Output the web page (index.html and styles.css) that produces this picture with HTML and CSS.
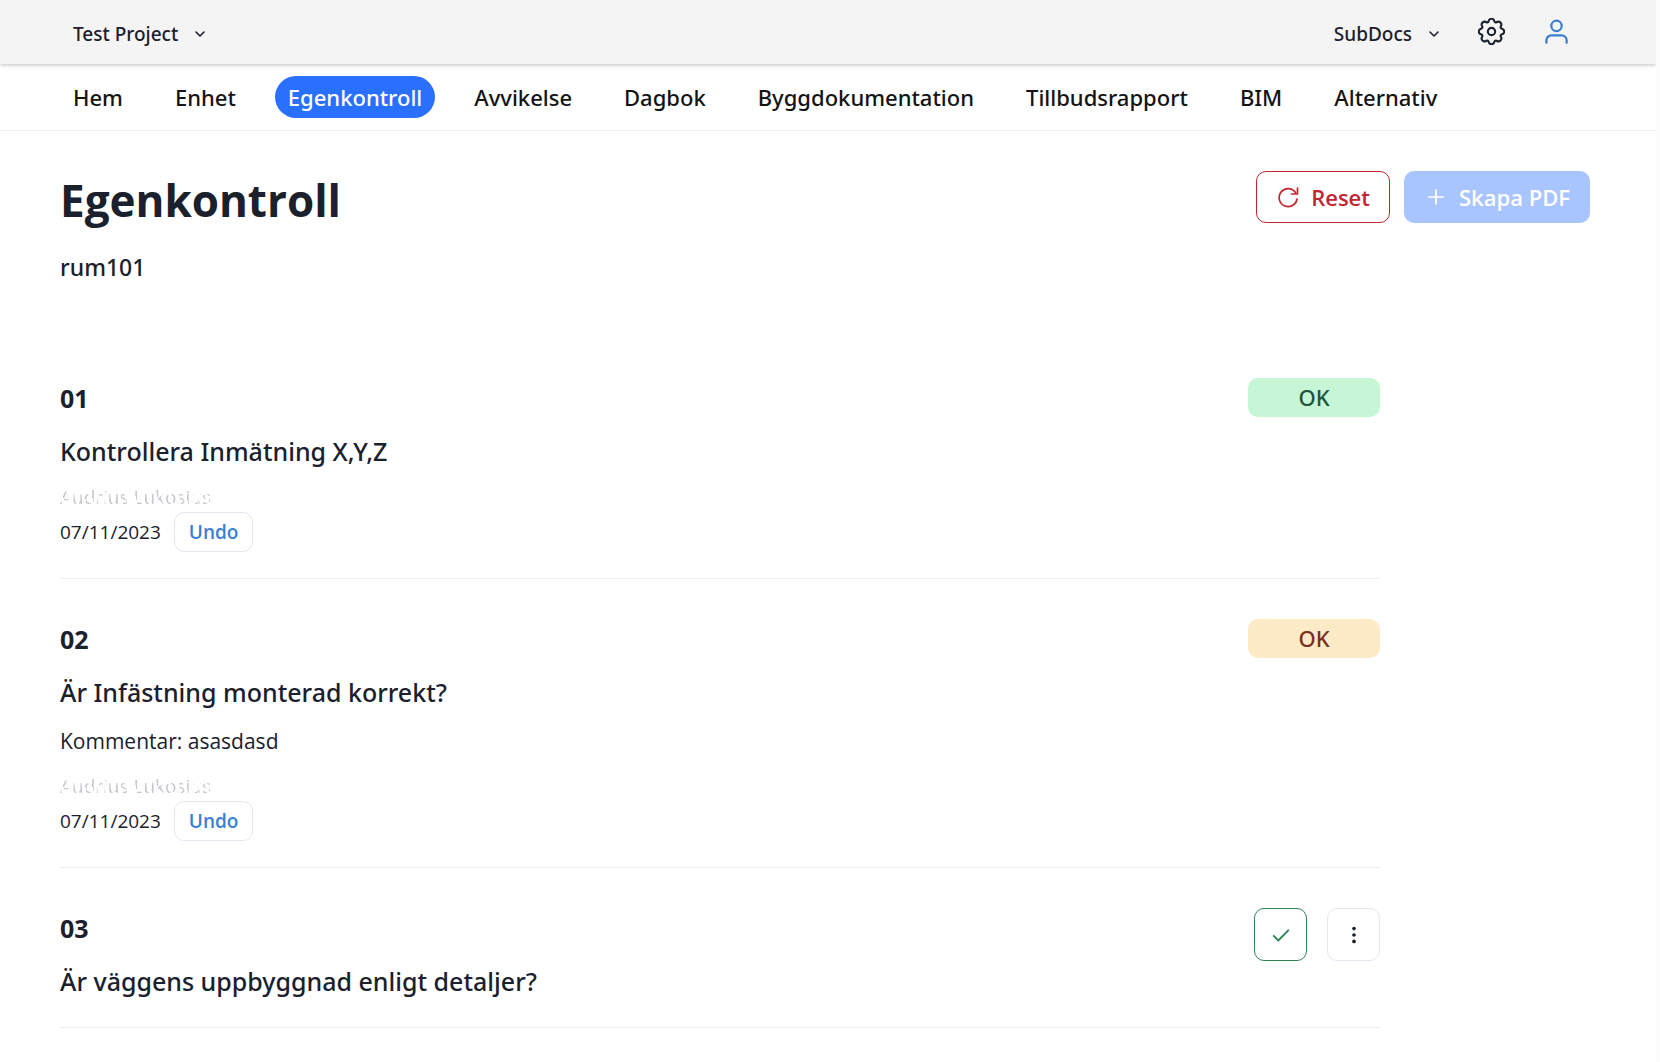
FILE: index.html
```html
<!DOCTYPE html>
<html lang="sv">
<head>
<meta charset="utf-8">
<meta name="viewport" content="width=device-width, initial-scale=1">
<title>Egenkontroll</title>
<link rel="stylesheet" href="styles.css">
</head>
<body>
<header class="topbar">
  <button class="picker" type="button">Test Project
    <svg class="chevron" viewBox="0 0 12 12"><path d="M2 4l4 4 4-4"/></svg>
  </button>
  <div class="topbar-tools">
    <button class="picker" type="button">SubDocs
      <svg class="chevron" viewBox="0 0 12 12"><path d="M2 4l4 4 4-4"/></svg>
    </button>
    <button class="tool" type="button" aria-label="Settings">
      <svg class="gear" viewBox="-0.500 -0.500 17 17"><circle cx="8" cy="8" r="2.300"/><path d="M9.796 1.343c-.527-1.790-3.065-1.790-3.592 0l-.094.319a.873.873 0 0 1-1.255.520l-.292-.160c-1.640-.892-3.433.902-2.540 2.541l.159.292a.873.873 0 0 1-.520 1.255l-.319.094c-1.790.527-1.790 3.065 0 3.592l.319.094a.873.873 0 0 1 .520 1.255l-.160.292c-.892 1.640.901 3.434 2.541 2.540l.292-.159a.873.873 0 0 1 1.255.520l.094.319c.527 1.790 3.065 1.790 3.592 0l.094-.319a.873.873 0 0 1 1.255-.520l.292.160c1.640.893 3.434-.902 2.540-2.541l-.159-.292a.873.873 0 0 1 .520-1.255l.319-.094c1.790-.527 1.790-3.065 0-3.592l-.319-.094a.873.873 0 0 1-.520-1.255l.160-.292c.893-1.640-.902-3.433-2.541-2.540l-.292.159a.873.873 0 0 1-1.255-.520z"/></svg>
    </button>
    <button class="tool" type="button" aria-label="Account">
      <svg class="user" viewBox="0 0 24 24"><circle cx="12" cy="7" r="4.600"/><path d="M3 22v-2a4.500 4.500 0 0 1 4.500-4.500h9a4.500 4.500 0 0 1 4.500 4.500v2"/></svg>
    </button>
  </div>
</header>
<nav class="tabs">
  <a class="tab" href="#">Hem</a>
  <a class="tab" href="#">Enhet</a>
  <a class="tab tab-active" href="#" aria-current="page">Egenkontroll</a>
  <a class="tab" href="#">Avvikelse</a>
  <a class="tab" href="#">Dagbok</a>
  <a class="tab" href="#">Byggdokumentation</a>
  <a class="tab" href="#">Tillbudsrapport</a>
  <a class="tab" href="#">BIM</a>
  <a class="tab" href="#">Alternativ</a>
</nav>
<main class="page">
  <div class="page-head">
    <div>
      <h1 class="title">Egenkontroll</h1>
      <p class="room">rum101</p>
    </div>
    <div class="actions">
      <button class="btn btn-reset" type="button">
        <svg class="btn-icon" viewBox="0 0 22 22"><path d="M18.500 6.500A9 9 0 1 0 20 13M20.500 2v6h-6"/></svg>
        Reset
      </button>
      <button class="btn btn-create" type="button" disabled>
        <svg class="btn-icon" viewBox="0 0 22 22"><path d="M11 4v14M4 11h14"/></svg>
        Skapa PDF
      </button>
    </div>
  </div>
  <div class="checks">
    <section class="check">
      <div class="check-body">
        <p class="number">01</p>
        <h2 class="question">Kontrollera Inmätning X,Y,Z</h2>
        <p class="signer">Audrius Lukosius</p>
        <div class="stamp"><time datetime="2023-11-07">07/11/2023</time><button class="undo" type="button">Undo</button></div>
      </div>
      <span class="badge badge-green">OK</span>
    </section>
    <section class="check">
      <div class="check-body">
        <p class="number">02</p>
        <h2 class="question">Är Infästning monterad korrekt?</h2>
        <p class="comment">Kommentar: asasdasd</p>
        <p class="signer">Audrius Lukosius</p>
        <div class="stamp"><time datetime="2023-11-07">07/11/2023</time><button class="undo" type="button">Undo</button></div>
      </div>
      <span class="badge badge-orange">OK</span>
    </section>
    <section class="check">
      <div class="check-body">
        <p class="number">03</p>
        <h2 class="question">Är väggens uppbyggnad enligt detaljer?</h2>
      </div>
      <div class="check-tools">
        <button class="square square-ok" type="button" aria-label="OK"><svg viewBox="0 0 24 24"><path d="M4 13l5 5L20 7"/></svg></button>
        <button class="square" type="button" aria-label="More"><svg class="dots" viewBox="0 0 24 24"><circle cx="12" cy="5" r="2"/><circle cx="12" cy="12" r="2"/><circle cx="12" cy="19" r="2"/></svg></button>
      </div>
    </section>
  </div>
</main>
</body>
</html>
```

FILE: styles.css
```css
* { box-sizing: border-box; }
body {
  margin: 0;
  min-height: 100vh;
  border-right: 4px solid #fcfcfc;
  background: #fff;
  color: #1a202c;
  font-family: "Open Sans", "Noto Sans", sans-serif;
  font-size: 19px;
  line-height: 28px;
}
h1, h2, p { margin: 0; }
button { font: inherit; color: inherit; margin: 0; padding: 0; border: 0; background: none; cursor: pointer; }
svg { display: block; flex: none; fill: none; stroke: currentColor; stroke-linecap: round; stroke-linejoin: round; }

.topbar {
  display: flex;
  justify-content: space-between;
  align-items: center;
  height: 64px;
  padding: 0 86px 0 73px;
  background: #f4f4f4;
  box-shadow: 0 1px 4px rgba(0, 0, 0, 0.25);
}
.picker { display: flex; align-items: center; gap: 16px; padding-top: 4px; font-family: "Noto Sans", sans-serif; font-size: 19px; font-weight: 500; }
.chevron { width: 12px; height: 12px; stroke-width: 1.6; }
.topbar-tools { display: flex; align-items: center; gap: 38px; }
.tool { display: block; padding-bottom: 2px; }
.tool svg { width: 27px; height: 27px; }
.gear { stroke-width: 1.3; }
.user { color: #3a7fd0; stroke-width: 2; }

.tabs {
  display: flex;
  align-items: center;
  gap: 26px;
  height: 67px;
  padding: 0 60px;
  border-bottom: 1px solid #edeef0;
}
.tab { padding: 7px 13px; border-radius: 21px; color: #141414; font-family: "Noto Sans", sans-serif; font-size: 22px; font-weight: 500; text-decoration: none; }
.tab-active { background: #2970ff; color: #fff; }

.page { padding: 40px 66px 32px 60px; }
.page-head { display: flex; justify-content: space-between; align-items: flex-start; min-height: 167px; }
.title { font-size: 44px; line-height: 58px; font-weight: 700; }
.room { margin-top: 22px; font-family: "Noto Sans", sans-serif; font-size: 23px; line-height: 32px; font-weight: 500; }
.actions { display: flex; gap: 14px; }
.btn { display: flex; align-items: center; gap: 12px; height: 52px; padding: 0 19px 0 20px; border: 1px solid transparent; border-radius: 10px; font-size: 22px; font-weight: 600; }
.btn-icon { width: 22px; height: 22px; stroke-width: 1.7; }
.btn-reset { color: #c2262f; border-color: #c2262f; background: #fff; }
.btn-create { color: #fff; background: #a9c5ff; }

.checks { max-width: 1320px; }
.check { display: flex; justify-content: space-between; align-items: flex-start; padding: 40px 0 26px; border-bottom: 1px solid #edeef0; }
.number { font-size: 25px; line-height: 40px; font-weight: 700; }
.question { margin-top: 13px; font-family: "Noto Sans", sans-serif; font-size: 25px; line-height: 40px; font-weight: 500; }
.comment { margin-top: 10px; font-size: 21px; line-height: 38px; }
.signer {
  margin-top: 11px;
  color: #c4c7cc;
  font-size: 19px;
  line-height: 30px;
  mask-image: repeating-linear-gradient(75deg, #000 0 3px, transparent 5px 7px);
}
.stamp { display: flex; align-items: center; gap: 13px; }
.undo { height: 40px; padding: 0 14px; border: 1px solid #e2e8f0; border-radius: 10px; color: #3a7fd0; font-size: 19px; font-weight: 600; }
.badge { width: 132px; border-radius: 10px; font-family: "Noto Sans", sans-serif; font-size: 22px; line-height: 39px; font-weight: 500; text-align: center; }
.badge-green { background: #c6f6d5; color: #22543d; }
.badge-orange { background: #fdebc8; color: #7b2f20; }
.check-tools { display: flex; gap: 20px; }
.square { display: grid; place-items: center; width: 53px; height: 53px; border: 1px solid #e2e8f0; border-radius: 10px; }
.square svg { width: 22px; height: 22px; stroke-width: 2; }
.square-ok { color: #2f855a; border-color: #2f855a; }
.square .dots { fill: currentColor; stroke: none; }
```
